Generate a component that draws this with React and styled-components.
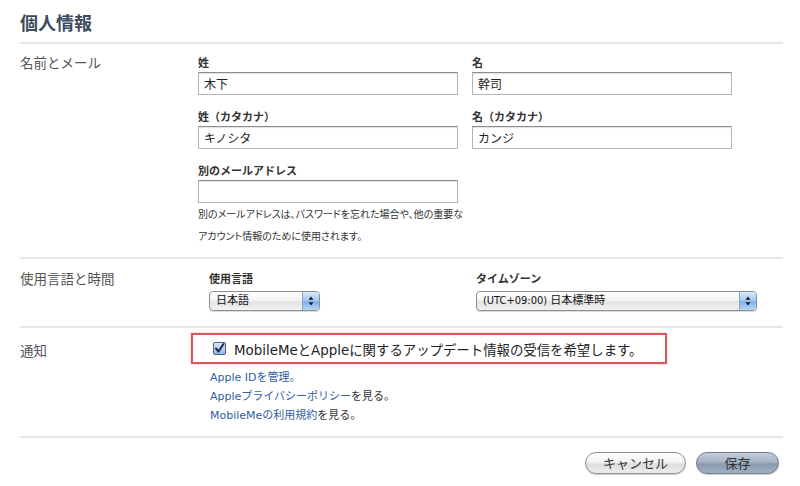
import React from "react";
import styled, { createGlobalStyle } from "styled-components";

const Global = createGlobalStyle`
  html, body { margin: 0; padding: 0; background: #fff; }
  body {
    font-family: "DejaVu Sans", "Noto Sans CJK JP", sans-serif;
    color: #333;
  }
`;

const Page = styled.div`
  width: 800px;
  height: 486px;
  box-sizing: border-box;
  padding: 0 17px 0 20px;
  overflow: hidden;
`;

const Title = styled.h1`
  margin: 0;
  padding: 12px 0 10px;
  font-size: 18px;
  line-height: 20px;
  font-weight: bold;
  color: #3b4b5d;
  font-family: "Noto Sans CJK JP", sans-serif;
  border-bottom: 2px solid #e6e6e6;
`;

const Section = styled.section`
  display: grid;
  grid-template-columns: 178px 1fr;
  padding: ${(p) => p.$pt}px 0 ${(p) => p.$pb}px;
  border-bottom: 2px solid #e6e6e6;
`;

const SectionLabel = styled.div`
  font-family: "Noto Sans CJK JP", sans-serif;
  font-size: 13.5px;
  line-height: 14px;
  color: #555;
  margin-top: ${(p) => p.$mt || 0}px;
`;

const Content = styled.div`
  display: flex;
  flex-direction: column;
  padding-left: ${(p) => p.$pl || 0}px;
`;

const FieldGrid = styled.div`
  display: grid;
  grid-template-columns: ${(p) => p.$cols};
  column-gap: ${(p) => p.$gap ?? 14}px;
  row-gap: 14px;
`;

const Field = styled.div`
  display: flex;
  flex-direction: column;
`;

const FieldLabel = styled.label`
  font-family: "Noto Sans CJK JP", sans-serif;
  font-size: 11px;
  font-weight: bold;
  line-height: 14px;
  color: #333;
  margin-bottom: ${(p) => p.$mb ?? 3}px;
`;

const TextInput = styled.div`
  box-sizing: border-box;
  height: 23px;
  width: ${(p) => p.$w}px;
  border: 1px solid #b5b5b5;
  border-top-color: #8d8d8d;
  box-shadow: inset 0 1px 1px rgba(0,0,0,0.12);
  background: #fff;
  font-family: "Noto Sans CJK JP", sans-serif;
  font-size: 12px;
  line-height: 21px;
  padding-left: 5px;
  color: #222;
`;

const Help = styled.p`
  margin: 0;
  font-family: "Noto Sans CJK JP", sans-serif;
  font-size: 10px;
  line-height: 22px;
  color: #333;
  font-feature-settings: "palt";
`;

const Select = styled.div`
  position: relative;
  box-sizing: border-box;
  width: ${(p) => p.$w}px;
  height: 20px;
  border: 1px solid #8e8e8e;
  border-radius: 4px;
  background: linear-gradient(#ffffff 0%, #f4f4f4 45%, #e3e3e3 55%, #f2f2f2 100%);
  box-shadow: 0 1px 1px rgba(0,0,0,0.15);
  font-family: "DejaVu Sans Condensed", "Noto Sans CJK JP", sans-serif;
  font-size: 11px;
  line-height: 18px;
  padding-left: 6px;
  color: #111;
  overflow: hidden;
`;

const SelectArrow = styled.span`
  position: absolute;
  top: 0;
  right: 0;
  bottom: 0;
  width: 16px;
  border-left: 1px solid #8aa3c4;
  background: linear-gradient(#d8e8fb 0%, #a9cbf3 45%, #7fb1ee 55%, #b9d7fa 100%);
  display: flex;
  align-items: center;
  justify-content: center;
`;

const CheckBox = styled.div`
  box-sizing: border-box;
  margin-left: -7px;
  width: 476px;
  height: 31px;
  border: 2px solid #d9575a;
  box-shadow: 0 0 2px rgba(217,87,90,0.5);
  display: flex;
  align-items: center;
  padding-left: 20px;
  gap: 8px;
  font-family: "DejaVu Sans", "Noto Sans CJK JP", sans-serif;
  font-size: 13.4px;
  color: #222;
  white-space: nowrap;
`;

const Links = styled.div`
  margin-top: 4px;
  padding-left: 12px;
  display: flex;
  flex-direction: column;
`;

const LinkLine = styled.div`
  font-family: "DejaVu Sans", "Noto Sans CJK JP", sans-serif;
  font-size: 11px;
  line-height: 19px;
  color: #333;
`;

const Link = styled.a`
  color: #2f5ea6;
  text-decoration: none;
`;

const Footer = styled.div`
  display: flex;
  justify-content: flex-end;
  gap: 10px;
  padding: 14px 4px 0 0;
`;

const Button = styled.button`
  box-sizing: border-box;
  width: ${(p) => p.$w}px;
  height: 22px;
  border-radius: 11px;
  border: 1px solid ${(p) => (p.$primary ? "#6e7f94" : "#8f8f8f")};
  background: ${(p) =>
    p.$primary
      ? "linear-gradient(#c3ceda 0%, #a6b4c4 45%, #8a9bb0 55%, #9fb0c3 100%)"
      : "linear-gradient(#ffffff 0%, #f3f3f3 45%, #dedede 55%, #ececec 100%)"};
  box-shadow: 0 1px 1px rgba(0,0,0,0.2);
  font-family: "Noto Sans CJK JP", sans-serif;
  font-size: 13px;
  line-height: 20px;
  color: #333;
  padding: 0;
`;

const Arrows = () => (
  <svg width="6" height="10" viewBox="0 0 6 10">
    <path d="M3 0.5 L5.5 3.8 H0.5 Z" fill="#1a1a1a" />
    <path d="M3 9.5 L5.5 6.2 H0.5 Z" fill="#1a1a1a" />
  </svg>
);

const Check = () => (
  <svg width="13" height="13" viewBox="0 0 13 13">
    <defs>
      <linearGradient id="cb" x1="0" y1="0" x2="0" y2="1">
        <stop offset="0" stopColor="#dfeafb" />
        <stop offset="1" stopColor="#8fb3e6" />
      </linearGradient>
    </defs>
    <rect x="0.5" y="0.5" width="12" height="12" rx="1.5" fill="url(#cb)" stroke="#50637f" />
    <path d="M3 6.5 L5.5 9.5 L10.5 2" fill="none" stroke="#1d2c4a" strokeWidth="2" strokeLinecap="round" strokeLinejoin="round" />
  </svg>
);

export default function App() {
  return (
    <Page>
      <Global />
      <Title>個人情報</Title>

      <Section $pt={11} $pb={10}>
        <SectionLabel>名前とメール</SectionLabel>
        <Content>
          <FieldGrid $cols="260px 260px">
            <Field>
              <FieldLabel>姓</FieldLabel>
              <TextInput $w={260}>木下</TextInput>
            </Field>
            <Field>
              <FieldLabel>名</FieldLabel>
              <TextInput $w={260}>幹司</TextInput>
            </Field>
            <Field>
              <FieldLabel>姓（カタカナ）</FieldLabel>
              <TextInput $w={260}>キノシタ</TextInput>
            </Field>
            <Field>
              <FieldLabel>名（カタカナ）</FieldLabel>
              <TextInput $w={260}>カンジ</TextInput>
            </Field>
            <Field>
              <FieldLabel>別のメールアドレス</FieldLabel>
              <TextInput $w={260}></TextInput>
            </Field>
          </FieldGrid>
          <Help>
            別のメールアドレスは、パスワードを忘れた場合や、他の重要な
            <br />
            アカウント情報のために使用されます。
          </Help>
        </Content>
      </Section>

      <Section $pt={12} $pb={15}>
        <SectionLabel>使用言語と時間</SectionLabel>
        <Content $pl={11}>
          <FieldGrid $cols="267px 281px" $gap={0}>
            <Field>
              <FieldLabel $mb={6}>使用言語</FieldLabel>
              <Select $w={111}>
                日本語
                <SelectArrow><Arrows /></SelectArrow>
              </Select>
            </Field>
            <Field>
              <FieldLabel $mb={6}>タイムゾーン</FieldLabel>
              <Select $w={281}>
                (UTC+09:00) 日本標準時
                <SelectArrow><Arrows /></SelectArrow>
              </Select>
            </Field>
          </FieldGrid>
        </Content>
      </Section>

      <Section $pt={5} $pb={11}>
        <SectionLabel $mt={10}>通知</SectionLabel>
        <Content>
          <CheckBox>
            <Check />
            <span>MobileMeとAppleに関するアップデート情報の受信を希望します。</span>
          </CheckBox>
          <Links>
            <LinkLine><Link href="#">Apple IDを管理。</Link></LinkLine>
            <LinkLine><Link href="#">Appleプライバシーポリシー</Link>を見る。</LinkLine>
            <LinkLine><Link href="#">MobileMeの利用規約</Link>を見る。</LinkLine>
          </Links>
        </Content>
      </Section>

      <Footer>
        <Button $w={101}>キャンセル</Button>
        <Button $w={83} $primary>保存</Button>
      </Footer>
    </Page>
  );
}
